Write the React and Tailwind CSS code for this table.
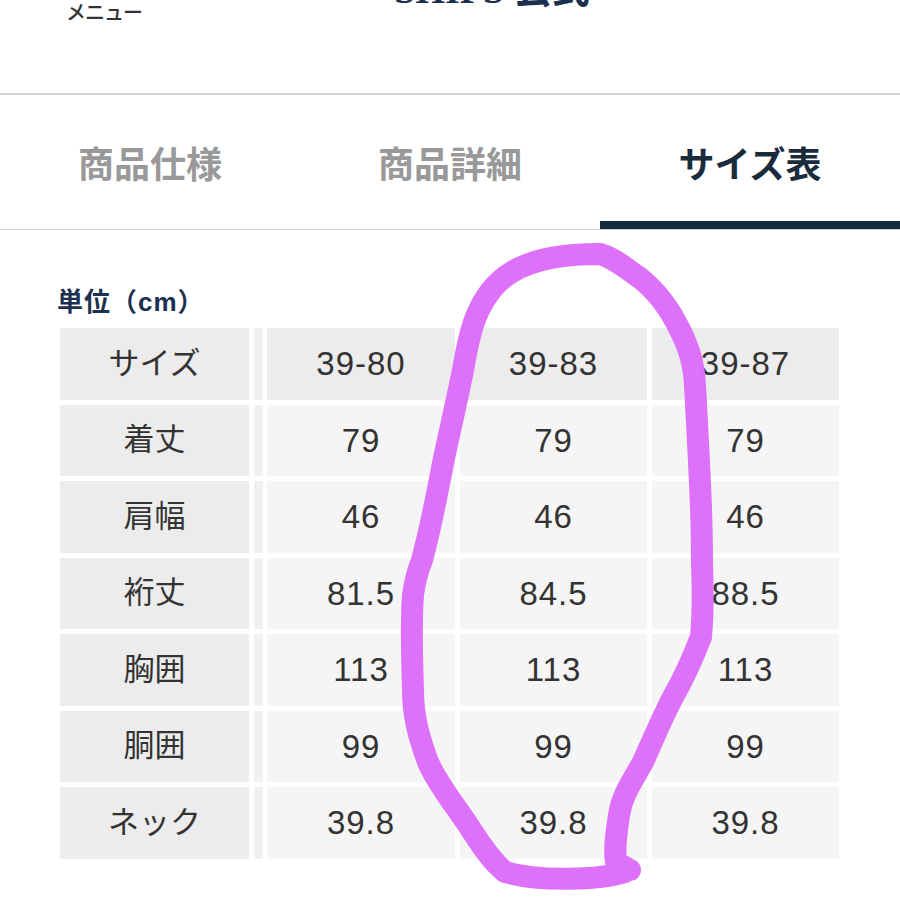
const rows = [
  ['サイズ', '39-80', '39-83', '39-87'],
  ['着丈', '79', '79', '79'],
  ['肩幅', '46', '46', '46'],
  ['裄丈', '81.5', '84.5', '88.5'],
  ['胸囲', '113', '113', '113'],
  ['胴囲', '99', '99', '99'],
  ['ネック', '39.8', '39.8', '39.8'],
];

const tabs = ['商品仕様', '商品詳細', 'サイズ表'];

function Loop() {
  // hand-drawn marker circle around the middle column
  const d =
    'M625 872 C600 880 540 882 505 872 C490 860 478 840 470 828 C455 805 438 785 428 762 C418 735 413 715 413 690 C412 660 411 620 413 595 C415 580 418 570 422 560 C430 530 437 495 443 463 C450 430 457 400 463 370 C466 352 468 340 474 322 C482 300 495 282 512 272 C535 258 565 254 600 254 C615 258 625 268 640 278 C655 290 668 305 680 330 C690 350 694 365 695 385 C697 420 698 440 699 463 C701 500 702 530 702 563 C703 590 703 615 701 637 C692 660 684 678 673 697 C662 718 652 742 643 762 C633 780 622 795 619 815 C616 835 614 850 616 862 L630 870';
  return (
    <svg className="pointer-events-none absolute left-0 top-0" width="900" height="900" viewBox="0 0 900 900">
      <path d={d} fill="none" stroke="#dd6cf9" strokeWidth="22" strokeLinecap="round" strokeLinejoin="round" opacity="0.97" />
    </svg>
  );
}

export default function App() {
  return (
    <div
      className="relative h-[900px] w-[900px] overflow-hidden bg-white text-[#333]"
      style={{ fontFamily: '"Liberation Sans", "Noto Sans CJK JP", sans-serif' }}
    >
      <header className="h-[95px] overflow-hidden border-b-2 border-[#d4d4d4]">
        <div className="flex h-[8px] justify-center overflow-hidden">
          <span className="ml-[84px] mt-[-29px] text-[38px] font-bold leading-none text-[#1b2f4e]" style={{ fontFamily: '"Liberation Serif", "Noto Sans CJK JP", serif' }}>
            SHIPS 公式
          </span>
        </div>
        <div className="mt-[-5px] pl-[66px] text-[20px] font-medium leading-none tracking-[-1px] text-[#333]">メニュー</div>
      </header>

      <nav className="flex h-[135px] border-b border-[#d0d0d0]">
        {tabs.map((t, i) => (
          <div
            key={t}
            className={
              i === 2
                ? 'flex w-[300px] items-center justify-center border-b-[8px] border-[#142b40] pt-[16px] text-[36px] font-bold text-[#1a2b3c]'
                : 'flex w-[300px] items-center justify-center pt-[8px] text-[36px] font-bold text-[#999]'
            }
          >
            {t}
          </div>
        ))}
      </nav>

      <div className="pl-[57px] pt-[59px]">
        <div className="text-[26px] font-bold leading-none tracking-[1px] text-[#1d3050]">単位（cm）</div>
      </div>

      <div className="mt-[13px] ml-[60px] flex flex-col gap-[5px]">
        {rows.map((r, ri) => (
          <div key={r[0]} className="flex h-[71.5px] text-[31px]">
            <div className="flex w-[189px] items-center justify-center bg-[#ececec]">{r[0]}</div>
            <div className="ml-[5px] w-[9px] bg-[#f1f1f1]" />
            {r.slice(1).map((v, ci) => (
              <div
                key={ci}
                className={`flex items-center justify-center text-[33px] tracking-[1px] ${ci === 0 ? 'ml-[4px] w-[188px]' : 'ml-[5px] w-[187px]'} ${ri === 0 ? 'bg-[#ececec]' : 'bg-[#f5f5f5]'}`}
              >
                {v}
              </div>
            ))}
          </div>
        ))}
      </div>

      <Loop />
    </div>
  );
}
